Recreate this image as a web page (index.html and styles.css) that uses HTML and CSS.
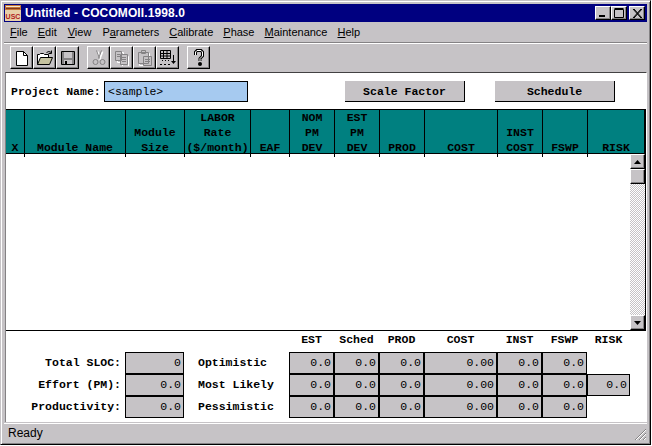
FILE: index.html
```html
<!DOCTYPE html>
<html lang="en">
<head>
  <meta charset="UTF-8">
  <title>Untitled - COCOMOII.1998.0</title>
  <link rel="stylesheet" href="styles.css">
</head>
<body>

<div class="window">
  <div class="titlebar">
    <svg class="app-icon" width="16" height="16" viewBox="0 0 16 16">
      <rect width="16" height="16" fill="#e8d0a8"/>
      <rect width="16" height="5" fill="#c87838"/>
      <rect x="1" y="1" width="14" height="1" fill="#f4e8d0"/>
      <rect x="1" y="3" width="14" height="1" fill="#803820"/>
      <text x="8" y="14" class="app-icon-text" text-anchor="middle">USC</text>
    </svg>
    <span class="title-text">Untitled - COCOMOII.1998.0</span>
    <div class="win-btn win-min"><svg width="8" height="8" viewBox="0 0 8 8"><rect x="0" y="6" width="6" height="2" fill="#000"/></svg></div>
    <div class="win-btn win-max"><svg width="10" height="10" viewBox="0 0 10 10"><path d="M0.5 1.5H9.5V9.5H0.5Z M0.5 0.5H9.5" fill="none" stroke="#000"/></svg></div>
    <div class="win-btn win-close"><svg width="10" height="9" viewBox="0 0 10 9"><path d="M1 0L9 9M2 0L10 9M9 0L1 9M10 0L2 9" stroke="#000" fill="none"/></svg></div>
  </div>

  <div class="menubar">
    <span><u>F</u>ile</span>
    <span><u>E</u>dit</span>
    <span class="menu-view"><u>V</u>iew</span>
    <span>P<u>a</u>rameters</span>
    <span><u>C</u>alibrate</span>
    <span><u>P</u>hase</span>
    <span><u>M</u>aintenance</span>
    <span><u>H</u>elp</span>
  </div>

  <div class="toolbar">
    <div class="tool-group">
      <div class="tool"><svg width="16" height="16" viewBox="0 0 16 16"><path d="M2.5 1.5H9.5L13.5 5.5V15.5H2.5Z" fill="#fff" stroke="#000"/><path d="M9.5 1.5V5.5H13.5" fill="none" stroke="#000"/></svg></div>
      <div class="tool"><svg width="18" height="16" viewBox="0 0 18 16"><path d="M1.5 14.5V4.5H3.5L4.5 3.5H7.5L8.5 4.5H12.5V7.5" fill="#fff" stroke="#000"/><path d="M1.5 14.5L4.5 7.5H16.5L13.5 14.5Z" fill="#c6c3a0" stroke="#000"/><path d="M10.5 2.5Q12.5 0.5 15.5 2.5M15.5 0.5V3.5H12.5" fill="none" stroke="#000"/></svg></div>
      <div class="tool"><svg width="16" height="16" viewBox="0 0 16 16"><path d="M1.5 1.5H14.5V14.5H1.5Z" fill="#848284" stroke="#000"/><rect x="4" y="2" width="8" height="6" fill="#c6c3c6"/><rect x="4" y="10" width="8" height="4" fill="#c6c3c6"/><rect x="5" y="11" width="2" height="3" fill="#000"/></svg></div>
    </div>
    <div class="tool-group">
      <div class="tool"><svg width="16" height="18" viewBox="0 0 16 18"><path d="M5.5 1.5L8.5 9.5M10.5 1.5L7.5 9.5" stroke="#fff" stroke-width="2" fill="none" transform="translate(1 1)"/><path d="M5.5 1.5L8.5 9.5M10.5 1.5L7.5 9.5" stroke="#848284" fill="none"/><circle cx="4.5" cy="13" r="2.5" fill="none" stroke="#848284"/><circle cx="11.5" cy="13" r="2.5" fill="none" stroke="#848284"/></svg></div>
      <div class="tool"><svg width="16" height="16" viewBox="0 0 16 16"><path d="M2.5 1.5H8.5V11.5H2.5Z M7.5 5.5H13.5V15.5H7.5Z" fill="#c6c3c6" stroke="#fff" transform="translate(1 1)"/><path d="M1.5 1.5H7.5V10.5H1.5Z M6.5 4.5H13.5V14.5H6.5Z M3 4.5H6 M3 6.5H6 M8 7.5H12 M8 9.5H12 M8 11.5H12" fill="#c6c3c6" stroke="#848284"/></svg></div>
      <div class="tool"><svg width="16" height="18" viewBox="0 0 16 18"><path d="M1.5 3.5H11.5V15.5H1.5Z" fill="none" stroke="#fff" transform="translate(1 1)"/><path d="M1.5 3.5H11.5V14.5H1.5Z M4.5 1.5H8.5V4.5H4.5Z M6.5 7.5H14.5V16.5H6.5Z M8 10.5H13 M8 12.5H13" fill="#c6c3c6" stroke="#848284"/></svg></div>
      <div class="tool"><svg width="18" height="18" viewBox="0 0 18 18"><path d="M1.5 1.5H11.5V9.5H1.5Z M1.5 4.5H11.5 M1.5 7H11.5 M4.5 1.5V9.5 M8 1.5V9.5" fill="none" stroke="#000"/><path d="M14.5 6V14" stroke="#000"/><path d="M12 12H17L14.5 15Z" fill="#000"/><path d="M3 11H4V12H3Z M6 11H7V12H6Z M9 11H10V12H9Z M1 15H3V16H1Z M5 15H7V16H5Z M9 15H11V16H9Z" fill="#000"/></svg></div>
    </div>
    <div class="tool-group">
      <div class="tool"><svg width="12" height="18" viewBox="0 0 12 18"><path d="M2.5 6V3L4 1.5H8L9.5 3V7L7 9.5V12" fill="none" stroke="#000" stroke-width="3"/><path d="M2.5 6V3L4 1.5H8L9.5 3V7L7 9.5V12" fill="none" stroke="#fff"/><circle cx="7" cy="15" r="2" fill="#000"/></svg></div>
    </div>
  </div>

  <div class="client">
    <div class="project-row">
      <label class="mono-bold project-label">Project Name:</label>
      <div class="project-input">&lt;sample&gt;</div>
      <div class="big-btn btn-scale mono-bold">Scale Factor</div>
      <div class="big-btn btn-schedule mono-bold">Schedule</div>
    </div>

    <div class="table-head mono-bold">
      <div class="th">X</div>
      <div class="th">Module Name</div>
      <div class="th">Module<br>Size</div>
      <div class="th">LABOR<br>Rate<br>($/month)</div>
      <div class="th">EAF</div>
      <div class="th">NOM<br>PM<br>DEV</div>
      <div class="th">EST<br>PM<br>DEV</div>
      <div class="th">PROD</div>
      <div class="th">COST</div>
      <div class="th">INST<br>COST</div>
      <div class="th">FSWP</div>
      <div class="th">RISK</div>
    </div>

    <div class="table-body">
      <div class="scrollbar">
        <div class="scroll-btn"><svg width="7" height="4" viewBox="0 0 7 4"><path d="M3.5 0L7 4H0Z" fill="#000"/></svg></div>
        <div class="scroll-thumb"></div>
        <div class="scroll-track"></div>
        <div class="scroll-btn"><svg width="7" height="4" viewBox="0 0 7 4"><path d="M0 0H7L3.5 4Z" fill="#000"/></svg></div>
      </div>
    </div>

    <div class="summary">
      <div></div><div></div><div></div>
      <div class="col-label mono-bold">EST</div>
      <div class="col-label mono-bold">Sched</div>
      <div class="col-label mono-bold">PROD</div>
      <div class="col-label mono-bold">COST</div>
      <div class="col-label mono-bold">INST</div>
      <div class="col-label mono-bold">FSWP</div>
      <div class="col-label mono-bold">RISK</div>

      <div class="row-label mono-bold">Total SLOC:</div>
      <div class="val">0</div>
      <div class="est-label mono-bold">Optimistic</div>
      <div class="val">0.0</div><div class="val">0.0</div><div class="val">0.0</div>
      <div class="val">0.00</div><div class="val">0.0</div><div class="val">0.0</div>
      <div></div>

      <div class="row-label mono-bold">Effort (PM):</div>
      <div class="val">0.0</div>
      <div class="est-label mono-bold">Most Likely</div>
      <div class="val">0.0</div><div class="val">0.0</div><div class="val">0.0</div>
      <div class="val">0.00</div><div class="val">0.0</div><div class="val">0.0</div>
      <div class="val">0.0</div>

      <div class="row-label mono-bold">Productivity:</div>
      <div class="val">0.0</div>
      <div class="est-label mono-bold">Pessimistic</div>
      <div class="val">0.0</div><div class="val">0.0</div><div class="val">0.0</div>
      <div class="val">0.00</div><div class="val">0.0</div><div class="val">0.0</div>
      <div></div>
    </div>
  </div>

  <div class="statusbar">
    <span>Ready</span>
    <svg class="grip" width="13" height="13" viewBox="0 0 13 13"><path d="M12 1L1 12M12 5L5 12M12 9L9 12" stroke="#848284" fill="none"/><path d="M12 2L2 12M12 6L6 12M12 10L10 12" stroke="#fff" fill="none"/></svg>
  </div>
</div>

</body>
</html>
```

FILE: styles.css
```css
html, body {
  margin: 0;
  padding: 0;
  background-color: #fff;
}
.window {
  width: 651px;
  height: 445px;
  box-sizing: border-box;
  padding: 3px;
  display: flex;
  flex-direction: column;
  background-color: #c6c3c6;
  border-top: 1px solid #c6c3c6;
  border-left: 1px solid #c6c3c6;
  border-right: 1px solid #000;
  border-bottom: 1px solid #000;
  box-shadow: inset 1px 1px 0 #fff, inset -1px -1px 0 #848284;
  font-family: "Liberation Sans", Arial, sans-serif;
  overflow: hidden;
}
.mono-bold {
  font-family: "Liberation Mono", "Courier New", monospace;
  font-weight: bold;
  font-size: 11.5px;
  color: #000;
}

/* title bar */
.titlebar {
  height: 18px;
  flex: none;
  display: flex;
  align-items: center;
  background-color: #000080;
  color: #fff;
  padding: 0 2px 0 1px;
}
.app-icon {
  margin-right: 4px;
}
.app-icon-text {
  font-family: "Liberation Sans", Arial, sans-serif;
  font-size: 7px;
  font-weight: bold;
  fill: #b02020;
}
.title-text {
  flex: 1;
  font-size: 12px;
  letter-spacing: 0.1px;
  font-weight: bold;
  white-space: nowrap;
}
.win-btn {
  width: 16px;
  height: 14px;
  box-sizing: border-box;
  display: flex;
  align-items: center;
  justify-content: center;
  background-color: #c6c3c6;
  border-top: 1px solid #fff;
  border-left: 1px solid #fff;
  border-right: 1px solid #000;
  border-bottom: 1px solid #000;
  box-shadow: inset -1px -1px 0 #848284;
}
.win-close {
  margin-left: 2px;
}

/* menu */
.menubar {
  height: 20px;
  flex: none;
  display: flex;
  align-items: center;
  box-sizing: border-box;
  padding-left: 6px;
  font-size: 11px;
  color: #000;
  gap: 10px;
}
.menu-view {
  margin-left: 1px;
  margin-right: 1px;
}

/* toolbar */
.toolbar {
  height: 30px;
  flex: none;
  box-sizing: border-box;
  display: flex;
  gap: 8px;
  padding: 3px 0 0 6px;
  border-top: 1px solid #848284;
  box-shadow: inset 0 1px 0 #fff;
}
.tool-group {
  display: flex;
}
.tool {
  width: 23px;
  height: 23px;
  box-sizing: border-box;
  display: flex;
  align-items: center;
  justify-content: center;
  background-color: #c6c3c6;
  border-top: 1px solid #fff;
  border-left: 1px solid #fff;
  border-right: 1px solid #000;
  border-bottom: 1px solid #000;
  box-shadow: inset -1px -1px 0 #848284;
}

/* client area */
.client {
  height: 350px;
  flex: none;
  box-sizing: border-box;
  display: flex;
  flex-direction: column;
  margin-left: 1px;
  background-color: #fff;
  border-top: 1px solid #424142;
  border-left: 1px solid #848284;
  border-right: 1px solid #fff;
}
.project-row {
  height: 36px;
  flex: none;
  display: flex;
  align-items: center;
  box-sizing: border-box;
  padding: 0 0 0 5px;
}
.project-label {
  width: 93px;
}
.project-input {
  width: 144px;
  height: 21px;
  box-sizing: border-box;
  display: flex;
  align-items: center;
  padding-left: 3px;
  background-color: #a6caf0;
  border: 1px solid #000;
  font-family: "Liberation Mono", "Courier New", monospace;
  font-size: 11.5px;
  color: #000;
}
.big-btn {
  width: 120px;
  height: 21px;
  box-sizing: border-box;
  display: flex;
  align-items: center;
  justify-content: center;
  padding-top: 1px;
  background-color: #c6c3c6;
  border-right: 1px solid #000;
  border-bottom: 1px solid #000;
}
.btn-scale {
  margin-left: 97px;
}
.btn-schedule {
  margin-left: 30px;
}

/* module table */
.table-head {
  width: 639px;
  height: 45px;
  flex: none;
  box-sizing: border-box;
  display: grid;
  grid-template-columns: 19px 101px 59px 66px 39px 45px 45px 45px 73px 45px 45px 57px;
  background-color: #008080;
  border-top: 1px solid #000;
  border-bottom: 1px solid #000;
  box-shadow: 1px 0 0 #000;
}
.th {
  display: flex;
  align-items: flex-end;
  justify-content: center;
  text-align: center;
  box-sizing: border-box;
  line-height: 15px;
  padding-bottom: 2px;
  border-right: 1px solid #000;
}
.table-body {
  flex: 1;
  display: flex;
  justify-content: flex-end;
  border-right: 1px solid #000;
  border-bottom: 1px solid #000;
}
.scrollbar {
  width: 15px;
  display: flex;
  flex-direction: column;
}
.scroll-btn, .scroll-thumb {
  height: 15px;
  flex: none;
  box-sizing: border-box;
  display: flex;
  align-items: center;
  justify-content: center;
  background-color: #c6c3c6;
  border-top: 1px solid #fff;
  border-left: 1px solid #fff;
  border-right: 1px solid #000;
  border-bottom: 1px solid #000;
  box-shadow: inset -1px -1px 0 #848284;
}
.scroll-track {
  flex: 1;
  background: repeating-conic-gradient(#c6c3c6 0 25%, #fff 0 50%) 0 0 / 2px 2px;
}

/* summary */
.summary {
  height: 91px;
  flex: none;
  display: grid;
  grid-template-columns: 119px 59px 105px 45px 45px 45px 73px 45px 45px 43px;
  grid-template-rows: 21px 22px 22px 22px;
}
.col-label {
  display: flex;
  align-items: center;
  justify-content: center;
  padding-bottom: 4px;
}
.row-label {
  display: flex;
  align-items: center;
  justify-content: flex-end;
  padding-right: 4px;
  padding-bottom: 1px;
  white-space: nowrap;
}
.est-label {
  display: flex;
  align-items: center;
  padding-left: 14px;
  padding-bottom: 1px;
  white-space: nowrap;
}
.val {
  display: flex;
  align-items: center;
  justify-content: flex-end;
  box-sizing: border-box;
  padding-right: 2px;
  padding-bottom: 1px;
  background-color: #c6c3c6;
  border: 1px solid #000;
  font-family: "Liberation Mono", "Courier New", monospace;
  font-size: 11.5px;
  color: #000;
}

/* status bar */
.statusbar {
  flex: 1;
  display: flex;
  align-items: center;
  justify-content: space-between;
  margin-top: 1px;
  padding-left: 4px;
  padding-top: 1px;
  font-size: 12px;
  color: #000;
  border-top: 1px solid #fff;
}
.grip {
  align-self: flex-end;
}
```
